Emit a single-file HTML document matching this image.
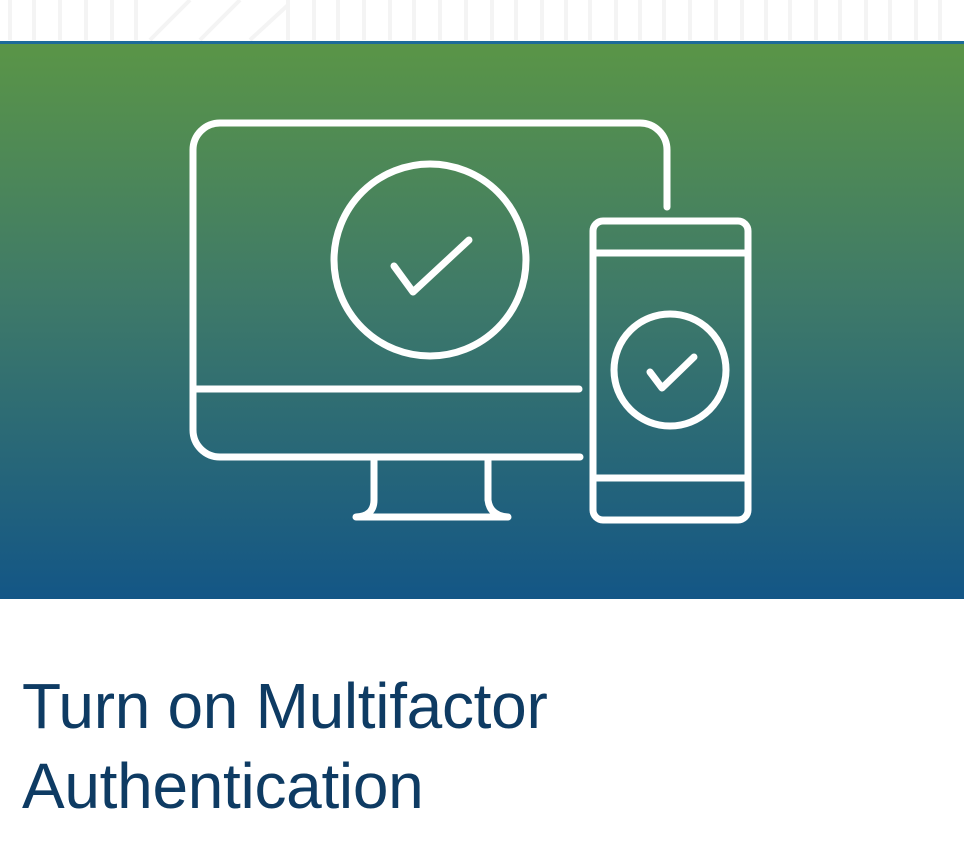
<!DOCTYPE html>
<html><head><style>
html,body{margin:0;padding:0;background:#fff;}
body{width:964px;height:861px;overflow:hidden;position:relative;font-family:"Liberation Sans",sans-serif;}
.top{position:absolute;left:0;top:0;width:964px;height:42px;background:#fff;}
.bl{position:absolute;left:0;top:41px;width:964px;height:3px;background:#1e6b9a;}
.hero{position:absolute;left:0;top:44px;width:964px;height:555px;background:linear-gradient(#5a9547,#3f7a68 45%,#135686);}
h1{position:absolute;left:22px;top:666px;margin:0;font-weight:normal;font-size:64px;line-height:80px;color:#0e3b63;letter-spacing:-0.3px;}
</style></head><body>
<div class="top">
<svg width="964" height="42" stroke="#f4f4f4" stroke-width="4" fill="none">
<path d="M10 0V40M34 0V40M60 0V40M86 0V40M112 0V40M136 0V40M288 0V40M314 0V40M338 0V40M364 0V40M390 0V40M414 0V40M440 0V40M466 0V40M492 0V40M516 0V40M542 0V40M566 0V40M590 0V40M616 0V40M640 0V40M664 0V40M690 0V40M716 0V40M742 0V40M766 0V40M790 0V40M816 0V40M840 0V40M866 0V40M890 0V40M916 0V40M940 0V40"/>
<path d="M150 40L190 0M200 40L240 0M250 40L288 5"/>
</svg>
</div>
<div class="bl"></div>
<div class="hero"></div>
<svg style="position:absolute;left:0;top:0" width="964" height="600" fill="none" stroke="#fff" stroke-width="7" stroke-linecap="round" stroke-linejoin="round">
<path d="M580 457H220A27 27 0 0 1 193 430V150A27 27 0 0 1 220 123H640A27 27 0 0 1 667 150V207"/>
<path d="M196 389H579"/>
<path d="M374 460V500Q374 516 356 517H508Q490 516 488 500V460"/>
<circle cx="430" cy="260" r="96"/>
<path d="M394 266L413 292L469 240"/>
<rect x="593" y="221" width="155" height="299" rx="10"/>
<path d="M596 253H745M596 478H745"/>
<circle cx="670" cy="370" r="56"/>
<path d="M650 372L662 388L694 357"/>
</svg>
<h1>Turn on Multifactor<br>Authentication</h1>
</body></html>
